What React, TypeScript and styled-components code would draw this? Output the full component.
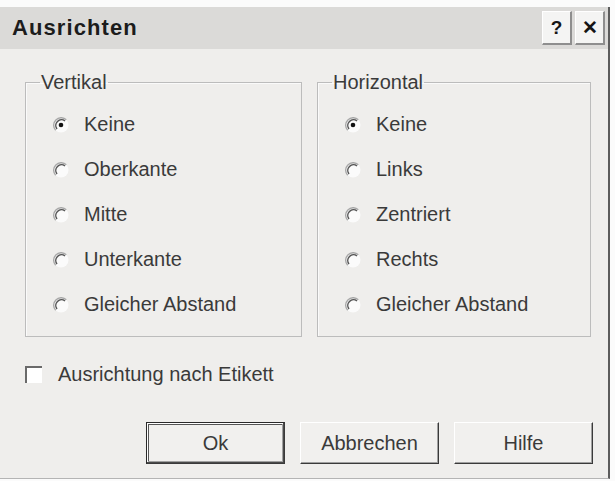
import styled, { createGlobalStyle } from 'styled-components';

const GlobalStyle = createGlobalStyle`
  body {
    margin: 0;
    background: #fbfbfb;
    font-family: "Liberation Sans", Arial, sans-serif;
  }
`;

const verticalOptions = ['Keine', 'Oberkante', 'Mitte', 'Unterkante', 'Gleicher Abstand'];
const horizontalOptions = ['Keine', 'Links', 'Zentriert', 'Rechts', 'Gleicher Abstand'];

const Radio = ({ checked }: { checked?: boolean }) => (
  <svg width="16" height="16" viewBox="0 0 16 16">
    <circle cx="8" cy="8" r="7.5" fill="#fbfbfb" />
    <path d="M13.3 2.7 A7.5 7.5 0 0 0 2.7 13.3" fill="none" stroke="#a8a8a8" strokeWidth="1.4" />
    <path d="M12 4 A5.7 5.7 0 0 0 4 12" fill="none" stroke="#555" strokeWidth="1.5" />
    {checked && <circle cx="8" cy="8" r="2.3" fill="#111" />}
  </svg>
);

const App = () => {
  return (
    <>
      <GlobalStyle />
      <Window>
        <TitleBar>
          <Title>Ausrichten</Title>
          <TitleButtons>
            <CaptionButton>?</CaptionButton>
            <CaptionButton>✕</CaptionButton>
          </TitleButtons>
        </TitleBar>
        <Content>
          <Groups>
            <Group $width={277}>
              <Legend>Vertikal</Legend>
              {verticalOptions.map((label, i) => (
                <RadioRow key={label}>
                  <Radio checked={i === 0} />
                  <span>{label}</span>
                </RadioRow>
              ))}
            </Group>
            <Group $width={274}>
              <Legend>Horizontal</Legend>
              {horizontalOptions.map((label, i) => (
                <RadioRow key={label}>
                  <Radio checked={i === 0} />
                  <span>{label}</span>
                </RadioRow>
              ))}
            </Group>
          </Groups>
          <CheckRow>
            <CheckBox />
            <span>Ausrichtung nach Etikett</span>
          </CheckRow>
          <ButtonRow>
            <PushButton $default>Ok</PushButton>
            <PushButton>Abbrechen</PushButton>
            <PushButton>Hilfe</PushButton>
          </ButtonRow>
        </Content>
      </Window>
    </>
  );
};

export default App;

const Window = styled.div`
  width: 608px;
  height: 471px;
  margin-top: 7px;
  background: #efeeec;
  border-right: 2px solid #5c5c5c;
  border-bottom: 1px solid #b4b4b4;
  display: flex;
  flex-direction: column;
`;

const TitleBar = styled.div`
  height: 42px;
  background: #dbdad8;
  display: flex;
  align-items: center;
  justify-content: space-between;
  padding: 0 3px 0 12px;
`;

const Title = styled.div`
  font-size: 22px;
  font-weight: bold;
  color: #1c1c1c;
  letter-spacing: 1.1px;
`;

const TitleButtons = styled.div`
  display: flex;
  gap: 3px;
`;

const CaptionButton = styled.div`
  width: 30px;
  height: 34px;
  box-sizing: border-box;
  background: #f4f4f3;
  border-right: 2px solid #8e8e8e;
  border-bottom: 2px solid #8e8e8e;
  border-top: 1px solid #fff;
  border-left: 1px solid #fff;
  display: flex;
  align-items: center;
  justify-content: center;
  font-size: 19px;
  font-weight: bold;
  color: #151515;
`;

const Content = styled.div`
  padding: 22px 15px 0 25px;
  display: flex;
  flex-direction: column;
`;

const Groups = styled.div`
  display: flex;
  gap: 15px;
`;

const Group = styled.fieldset<{ $width: number }>`
  width: ${(p) => p.$width}px;
  height: 266px;
  box-sizing: border-box;
  margin: 0;
  padding: 8px 0 0 0;
  border: 1px solid #bcbcbc;
  box-shadow: inset 1px 1px #fafafa;
`;

const Legend = styled.legend`
  margin-left: 14px;
  padding: 0 1px;
  font-size: 20px;
  line-height: 23px;
  color: #3a3a3a;
`;

const RadioRow = styled.div`
  height: 45px;
  display: flex;
  align-items: center;
  gap: 15px;
  padding-left: 27px;
  font-size: 20px;
  color: #3a3a3a;
`;

const CheckRow = styled.div`
  margin-top: 27px;
  height: 20px;
  display: flex;
  align-items: center;
  gap: 16px;
  font-size: 20px;
  color: #3a3a3a;
`;

const CheckBox = styled.div`
  width: 17px;
  height: 17px;
  box-sizing: border-box;
  background: #fff;
  border-top: 2px solid #6a6a6a;
  border-left: 2px solid #6a6a6a;
`;

const ButtonRow = styled.div`
  margin-top: 38px;
  display: flex;
  justify-content: flex-end;
  gap: 15px;
`;

const PushButton = styled.div<{ $default?: boolean }>`
  width: 139px;
  height: 42px;
  box-sizing: border-box;
  display: flex;
  align-items: center;
  justify-content: center;
  font-size: 20px;
  color: #3a3a3a;
  background: #f1f0ee;
  border: 1px solid ${(p) => (p.$default ? '#2a2a2a' : '#fff')};
  border-right-color: #3a3a3a;
  border-bottom-color: #3a3a3a;
  box-shadow: ${(p) =>
    p.$default
      ? 'inset -1px -1px #4a4a4a, inset 1px 1px #fff, inset -2px -2px #a0a0a0, inset 2px 2px #555'
      : 'inset -1px -1px #a0a0a0'};
`;
